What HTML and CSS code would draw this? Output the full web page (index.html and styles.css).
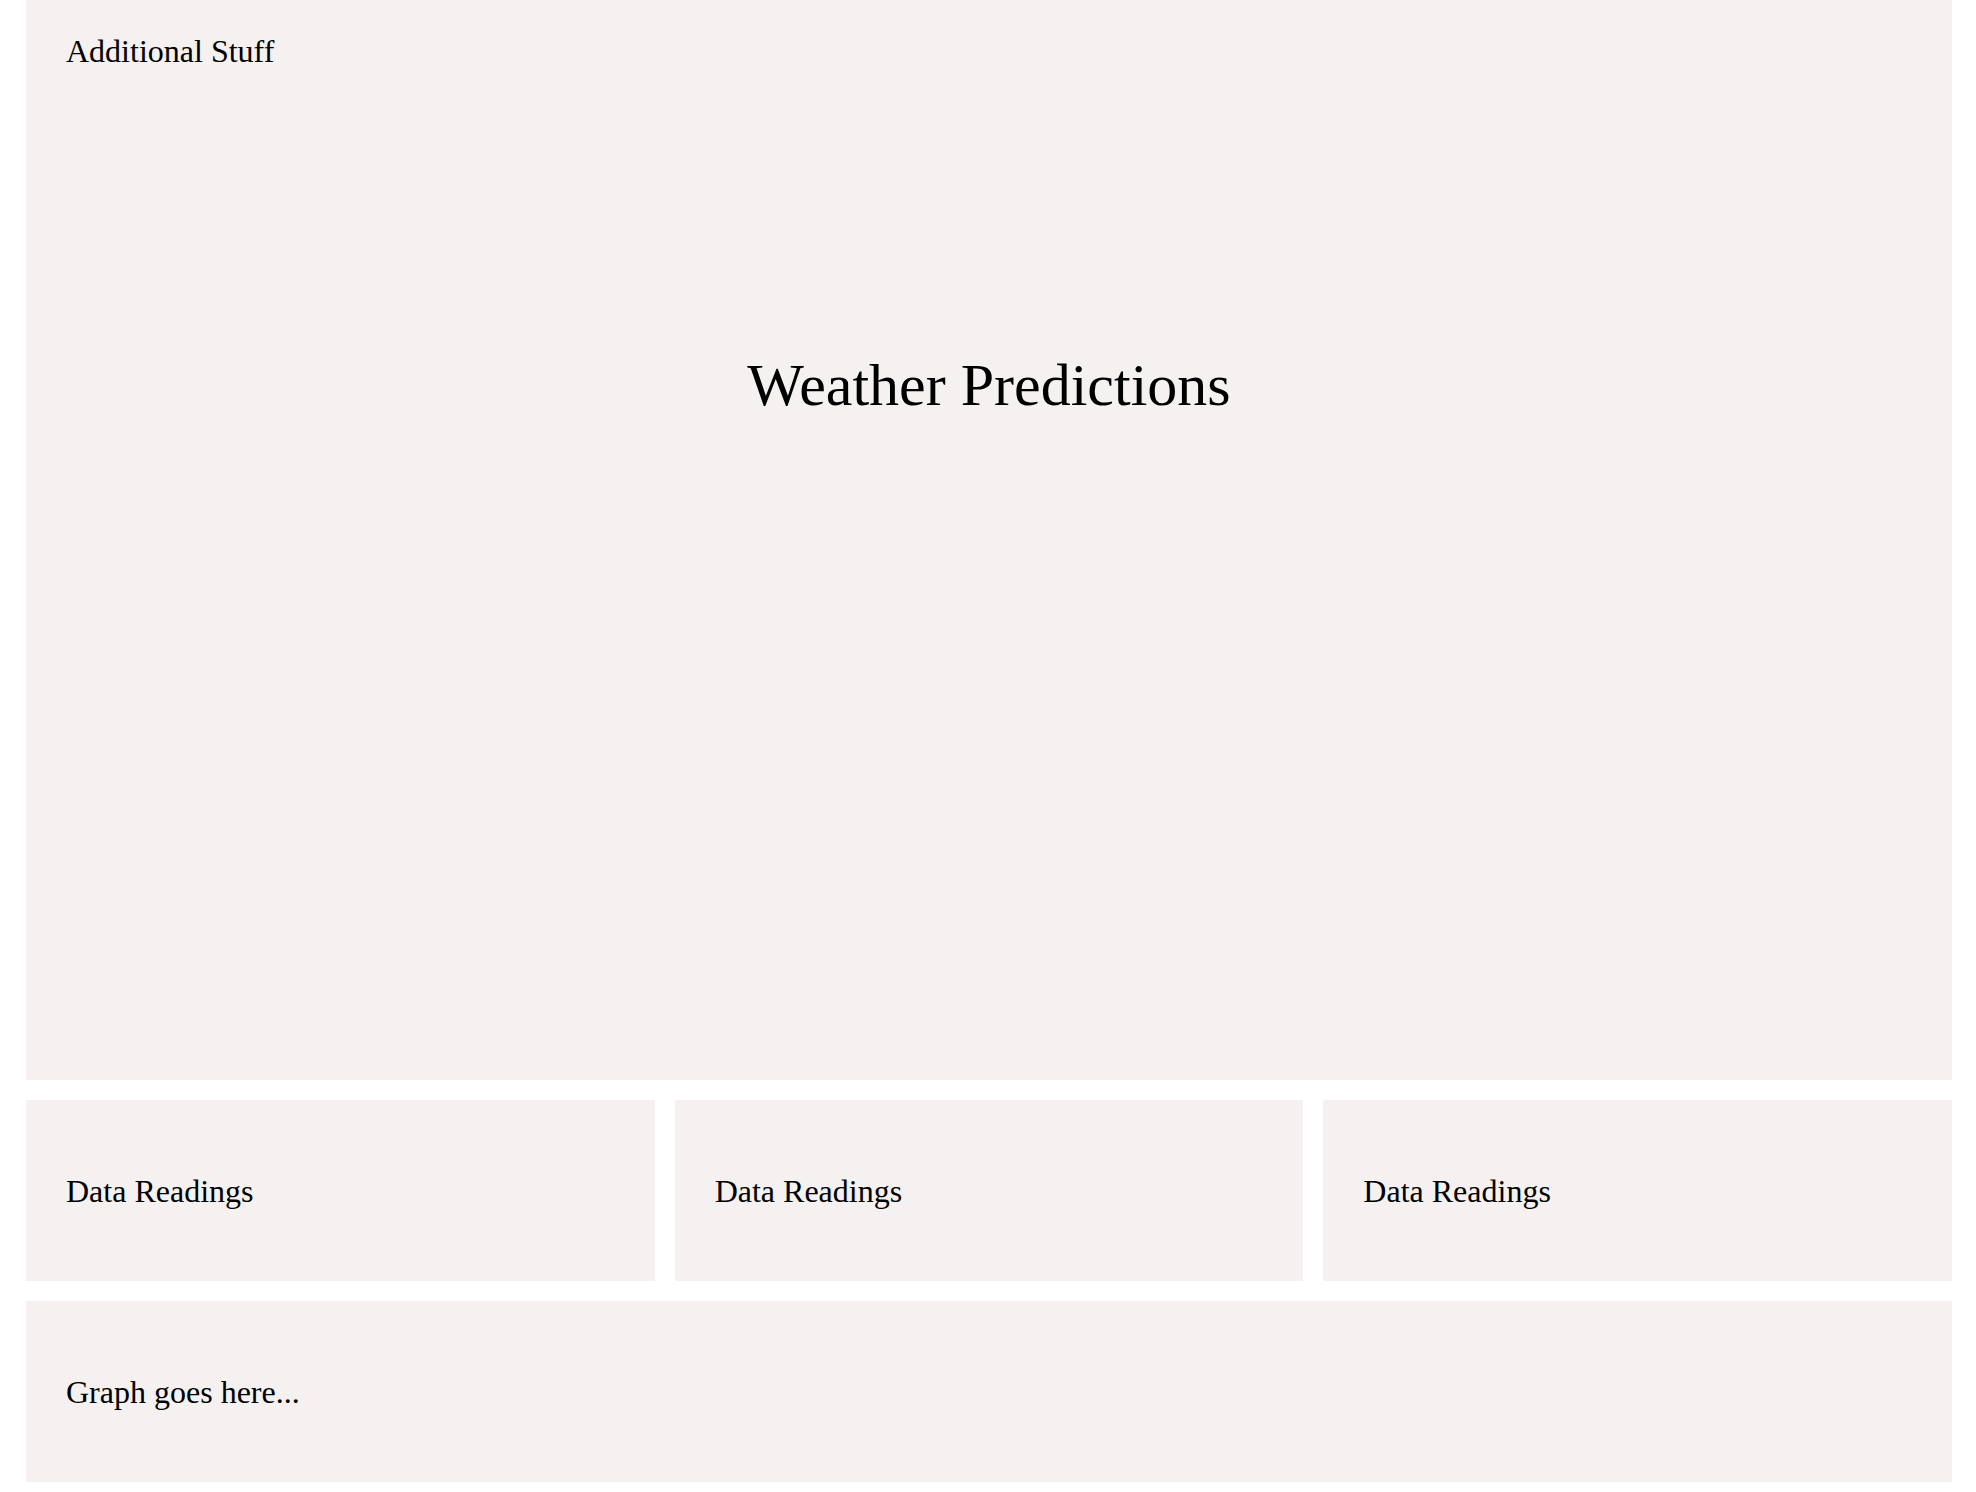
FILE: index.html
```html
<!DOCTYPE html>
<html>
<head>
<meta charset="utf-8">
<link rel="stylesheet" href="styles.css">
</head>
<body>
<div class="page">
  <section class="panel hero">
    <div class="extra">Additional Stuff</div>
    <h1 class="title">Weather Predictions</h1>
  </section>
  <div class="readings">
    <div class="panel card"><div class="label">Data Readings</div></div>
    <div class="panel card"><div class="label">Data Readings</div></div>
    <div class="panel card"><div class="label">Data Readings</div></div>
  </div>
  <section class="panel card graph"><div class="label">Graph goes here...</div></section>
</div>
</body>
</html>
```
FILE: styles.css
```css
html, body {
  margin: 0;
  padding: 0;
  background: #ffffff;
}
body {
  font-family: "Liberation Serif", "Times New Roman", serif;
  color: #000000;
}
.page {
  width: 1926px;
  margin-left: 26px;
  display: flex;
  flex-direction: column;
  gap: 20px;
}
.panel {
  background: #f4f1f0;
  box-sizing: border-box;
}
.hero {
  height: 1080px;
  padding: 33px 40px 0 40px;
}
.extra {
  font-size: 32px;
  line-height: 36px;
}
.title {
  margin: 281px 0 0 0;
  font-size: 60px;
  line-height: 70px;
  font-weight: normal;
  text-align: center;
}
.readings {
  display: grid;
  grid-template-columns: repeat(3, 1fr);
  gap: 20px;
}
.card {
  height: 181px;
  padding: 0 40px;
  display: flex;
  align-items: center;
}
.label {
  font-size: 32px;
  line-height: 36px;
}
```
